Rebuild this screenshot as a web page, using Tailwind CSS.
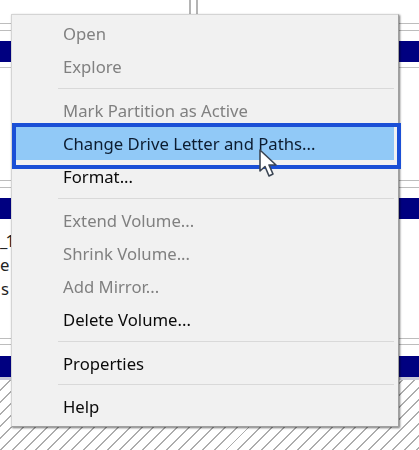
<!DOCTYPE html>
<html lang="en">
<head>
    <meta charset="UTF-8">
    <title>Disk Management context menu</title>
    <script src="https://cdn.jsdelivr.net/npm/@tailwindcss/browser@4"></script>
</head>
<body class="bg-white">
    <div class="relative w-[419px] h-[450px] overflow-hidden bg-white font-['Noto_Sans','Open_Sans',sans-serif]">

        <!-- disk panels behind the menu -->
        <div class="flex flex-col h-full">
            <div class="h-[23px] pl-[189px] shrink-0">
                <div class="w-[9px] h-[15px] border-x-2 border-[#b4b4b4]"></div>
            </div>
            <div class="h-[157px] shrink-0 flex flex-col">
                <div class="h-[1px] bg-[#bdbdbd]"></div>
                <div class="h-[6px]"></div>
                <div class="h-[1px] bg-[#bdbdbd]"></div>
                <div class="h-[10px]"></div>
                <div class="h-[21px] bg-[#000080]"></div>
                <div class="h-[5px]"></div>
                <div class="h-[1px] bg-[#c4c4c4]"></div>
            </div>
            <div class="h-[158px] shrink-0 flex flex-col">
                <div class="h-[1px] bg-[#bdbdbd]"></div>
                <div class="h-[6px]"></div>
                <div class="h-[1px] bg-[#bdbdbd]"></div>
                <div class="h-[10px]"></div>
                <div class="h-[21px] bg-[#000080]"></div>
                <div class="pt-[10px] text-[16.7px] leading-[24px] text-[#222] whitespace-nowrap">
                    <div class="tracking-[-2px]">_1</div>
                    <div>e</div>
                    <div class="pl-[1px]">s</div>
                </div>
            </div>
            <div class="flex flex-col shrink-0">
                <div class="h-[1px] bg-[#bdbdbd]"></div>
                <div class="h-[5px]"></div>
                <div class="h-[1px] bg-[#bdbdbd]"></div>
                <div class="h-[11px]"></div>
                <div class="h-[24px] bg-[#000080] border-b-[3px] border-[#c9c9d8]"></div>
            </div>
            <div class="flex-1 bg-[repeating-linear-gradient(135deg,#ffffff_0px,#ffffff_7px,#adadad_7px,#adadad_8.4px)]"></div>
        </div>

        <!-- context menu -->
        <div class="absolute left-[11px] top-[14px] w-[388px] h-[413px] bg-[#f1f1f1] border border-[#d4d4d4] border-r-[#a0a0a0] border-b-[#a0a0a0] shadow-[1px_1px_2px_rgba(0,0,0,0.55)] pt-[2.5px] text-[16.7px] text-[#0a0a0a] blur-[0.3px]">
            <div class="h-[33px] pl-[51px] flex items-center text-[#808080]">Open</div>
            <div class="h-[33px] pl-[51px] flex items-center text-[#808080]">Explore</div>
            <div class="h-[10.7px] pl-[46px] pr-[4px] flex items-center"><div class="w-full h-[1px] bg-[#d9d9d9]"></div></div>
            <div class="h-[33px] pl-[51px] flex items-center text-[#808080]">Mark Partition as Active</div>
            <div class="h-[33px] pl-[51px] mr-[4px] flex items-center bg-[#91c9f7] text-[#0c1c30]">Change Drive Letter and Paths...</div>
            <div class="h-[33px] pl-[51px] flex items-center">Format...</div>
            <div class="h-[10.7px] pl-[46px] pr-[4px] flex items-center"><div class="w-full h-[1px] bg-[#d9d9d9]"></div></div>
            <div class="h-[33px] pl-[51px] flex items-center text-[#808080]">Extend Volume...</div>
            <div class="h-[33px] pl-[51px] flex items-center text-[#808080]">Shrink Volume...</div>
            <div class="h-[33px] pl-[51px] flex items-center text-[#808080]">Add Mirror...</div>
            <div class="h-[33px] pl-[51px] flex items-center">Delete Volume...</div>
            <div class="h-[10.7px] pl-[46px] pr-[4px] flex items-center"><div class="w-full h-[1px] bg-[#d9d9d9]"></div></div>
            <div class="h-[33px] pl-[51px] flex items-center">Properties</div>
            <div class="h-[10.7px] pl-[46px] pr-[4px] flex items-center"><div class="w-full h-[1px] bg-[#d9d9d9]"></div></div>
            <div class="h-[33px] pl-[51px] flex items-center">Help</div>
        </div>

        <!-- highlight box drawn over the screenshot -->
        <div class="absolute left-[12px] top-[122.5px] w-[389px] h-[46px] border-[4px] border-[#1a4fd6]"></div>

        <!-- mouse pointer -->
        <svg class="absolute left-[258px] top-[149px]" width="20" height="31" viewBox="0 0 20 31">
            <path d="M2 1 L2 22 L7 17.5 L11 27 L15 25 L11 16 L18 16 Z" fill="#fff" stroke="#3c4654" stroke-width="1.6" stroke-linejoin="round"/>
        </svg>
    </div>
</body>
</html>
